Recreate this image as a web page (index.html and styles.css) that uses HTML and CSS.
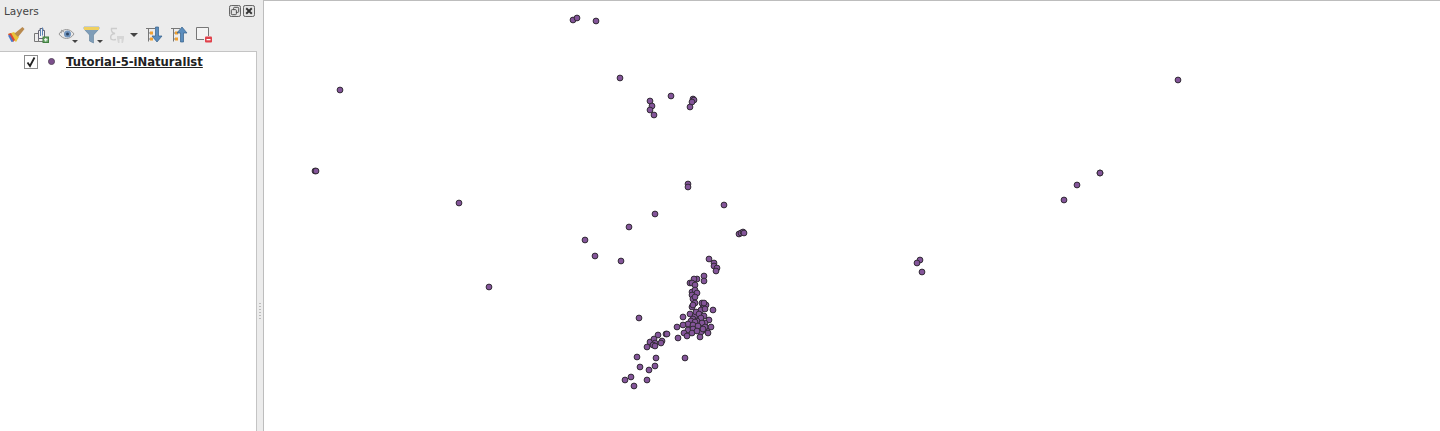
FILE: index.html
```html
<!DOCTYPE html>
<html>
  <head>
    <title>Layers</title>
    <link rel="stylesheet" href="styles.css">
  </head>
  <body>
    <div class="panel">
      <div class="panel-title">
        <span class="panel-name">Layers</span>
        <svg class="title-btn" viewBox="0 0 13 13">
          <rect x="0.5" y="0.5" width="12" height="12" rx="2" fill="#e4e4e4" stroke="#555"/>
          <rect x="5" y="2.5" width="5.5" height="5.5" rx="1" fill="none" stroke="#444"/>
          <rect x="2.5" y="5" width="5.5" height="5.5" rx="1" fill="#e4e4e4" stroke="#444"/>
        </svg>
        <svg class="title-btn" viewBox="0 0 13 13">
          <rect x="0.5" y="0.5" width="12" height="12" rx="2" fill="#e4e4e4" stroke="#555"/>
          <path d="M3.5 3.5l6 6M9.5 3.5l-6 6" stroke="#333" stroke-width="2"/>
        </svg>
      </div>

      <div class="toolbar">
        <!-- style brush -->
        <svg class="tool" viewBox="0 0 18 18">
          <path d="M1 8l6-2 5 5-3 5z" fill="#e8c33a"/>
          <path d="M1 8l3-1 4 7-2 2z" fill="#d8483a"/>
          <path d="M1 9.500l3.500 6.500 2-.5-3.500-6.500z" fill="#4a78c8"/>
          <path d="M7.500 7.500l8-6.500 2 2-6.500 8z" fill="#b98a4e"/>
        </svg>
        <!-- add group -->
        <svg class="tool tool-narrow" viewBox="0 0 16 18">
          <path d="M1.500 7.500h4v8h-4zM5.500 12.500h6v3h-6z" fill="#eee" stroke="#777"/>
          <path d="M5.500 4.500v8h6v-8h-1.500v-2h-3v2z" fill="#f2f2f2" stroke="#667"/>
          <path d="M7.500 3v7M9.500 1.500v8" stroke="#5a83b5"/>
          <rect x="10" y="11" width="5.500" height="5.500" fill="#6aa56a" stroke="#3f7f3f"/>
          <path d="M12.750 12v3.500M11 13.750h3.500" stroke="#fff"/>
        </svg>
        <!-- visibility -->
        <svg class="tool tool-wide" viewBox="0 0 22 18">
          <path d="M1 8c4-6 11-6 15 0-4 6-11 6-15 0z" fill="#e8e8e8" stroke="#999"/>
          <path d="M3 4l3 2M2 6l2 1" stroke="#999"/>
          <circle cx="9.500" cy="8" r="3.500" fill="#6f93bd"/>
          <circle cx="9.500" cy="8" r="1.500" fill="#2e4460"/>
          <path d="M14 14h6l-3 3z" fill="#444"/>
        </svg>
        <!-- filter -->
        <svg class="tool tool-wide" viewBox="0 0 22 18">
          <path d="M1 1h15v2l-5.500 6v8l-4-2v-6L1 3z" fill="#7f9db8" stroke="#4f7291" stroke-width=".5"/>
          <path d="M1 1h15v3H1z" fill="#efd060"/>
          <path d="M14 14h6l-3 3z" fill="#444"/>
        </svg>
        <!-- expression filter, disabled -->
        <svg class="tool" viewBox="0 0 18 18">
          <path d="M9 2.500H3.500C3 5 4 7 7 7.500 3 8 2 10 3 13c1 1 3 1 5 .5" fill="none" stroke="#ccc" stroke-width="1.400"/>
          <path d="M9 10h7v2.500l-1 4.500h-1.500v-4h-2v4H10l-1-4.500z" fill="#d6d6d6"/>
        </svg>
        <svg class="caret" viewBox="0 0 8 4"><path d="M0 0h8L4 4z" fill="#444"/></svg>
        <!-- expand all -->
        <svg class="tool" viewBox="0 0 18 18">
          <path d="M1 2.500h9M3.500 2.500v13M3.500 7h2M3.500 13h2" stroke="#777" fill="none"/>
          <rect x="5" y="5.500" width="3" height="3" fill="#f0a030"/>
          <rect x="5" y="11.500" width="3" height="3" fill="#f0a030"/>
          <path d="M10.500 1h3v9H17l-5 6-5-6h3.500z" fill="#5b8dbd" stroke="#35608a" stroke-width=".7"/>
        </svg>
        <!-- collapse all -->
        <svg class="tool" viewBox="0 0 18 18">
          <path d="M1 2.500h9M3.500 2.500v13M3.500 7h2M3.500 13h2" stroke="#777" fill="none"/>
          <rect x="5" y="5.500" width="3" height="3" fill="#f0a030"/>
          <rect x="5" y="11.500" width="3" height="3" fill="#f0a030"/>
          <path d="M10.500 16h3V7H17L12 1 7 7h3.500z" fill="#5b8dbd" stroke="#35608a" stroke-width=".7"/>
        </svg>
        <!-- remove layer -->
        <svg class="tool" viewBox="0 0 18 18">
          <path d="M9 13.500H1.500v-12h12V10" fill="#f4f4f4" stroke="#777"/>
          <rect x="10" y="10.500" width="7" height="6" rx="1" fill="#e0414b"/>
          <rect x="11.500" y="13" width="4" height="1.300" fill="#fff"/>
        </svg>
      </div>

      <div class="tree">
        <div class="tree-row">
          <span class="check">
            <svg viewBox="0 0 12 12"><path d="M2.500 6.500L5 10l4.500-8.500" fill="none" stroke="#222" stroke-width="1.800"/></svg>
          </span>
          <span class="layer-dot"></span>
          <span class="layer-name">Tutorial-5-iNaturalist</span>
        </div>
      </div>
    </div>

    <div class="splitter">
      <span></span><span></span><span></span><span></span><span></span><span></span>
    </div>

    <div class="map">
      <svg class="points" viewBox="264 1 1176 430" width="1176" height="430">
        <g>
          <circle cx="573" cy="20"/><circle cx="577" cy="18"/><circle cx="596" cy="21"/>
          <circle cx="620" cy="78"/><circle cx="340" cy="90"/><circle cx="1178" cy="80"/>
          <circle cx="650" cy="101"/><circle cx="652" cy="106"/><circle cx="650" cy="110"/>
          <circle cx="654" cy="115"/><circle cx="671" cy="96"/><circle cx="693" cy="99"/>
          <circle cx="694" cy="100"/><circle cx="692" cy="102"/><circle cx="690" cy="107"/>
          <circle cx="315" cy="171"/><circle cx="316" cy="171"/><circle cx="688" cy="184"/>
          <circle cx="688" cy="187"/><circle cx="1100" cy="173"/><circle cx="1100" cy="173"/><circle cx="1077" cy="185"/>
          <circle cx="1064" cy="200"/><circle cx="459" cy="203"/><circle cx="724" cy="205"/>
          <circle cx="655" cy="214"/><circle cx="629" cy="227"/><circle cx="739" cy="234"/>
          <circle cx="741" cy="233"/><circle cx="743" cy="232"/><circle cx="744" cy="233"/>
          <circle cx="585" cy="240"/><circle cx="595" cy="256"/><circle cx="621" cy="261"/>
          <circle cx="920" cy="260"/><circle cx="917" cy="263"/><circle cx="922" cy="272"/>
          <circle cx="489" cy="287"/>
          <circle cx="709" cy="259"/><circle cx="714" cy="263"/><circle cx="714" cy="266"/>
          <circle cx="717" cy="268"/><circle cx="716" cy="271"/><circle cx="704" cy="276"/>
          <circle cx="704" cy="281"/><circle cx="697" cy="279"/><circle cx="694" cy="279"/>
          <circle cx="690" cy="283"/><circle cx="692" cy="283"/><circle cx="695" cy="285"/>
          <circle cx="692" cy="292"/><circle cx="695" cy="290"/><circle cx="697" cy="293"/><circle cx="692" cy="295"/>
          <circle cx="693" cy="299"/><circle cx="695" cy="297"/><circle cx="692" cy="307"/><circle cx="695" cy="303"/>
          <circle cx="693" cy="305"/><circle cx="703" cy="305"/><circle cx="704" cy="307"/><circle cx="706" cy="305"/>
          <circle cx="702" cy="303"/><circle cx="704" cy="303"/><circle cx="713" cy="310"/><circle cx="701" cy="310"/>
          <circle cx="705" cy="309"/><circle cx="690" cy="314"/><circle cx="695" cy="316"/><circle cx="693" cy="319"/>
          <circle cx="696" cy="312"/><circle cx="699" cy="314"/><circle cx="704" cy="316"/><circle cx="701" cy="318"/>
          <circle cx="709" cy="320"/><circle cx="683" cy="317"/><circle cx="697" cy="321"/><circle cx="691" cy="321"/>
          <circle cx="705" cy="323"/><circle cx="702" cy="323"/><circle cx="695" cy="322"/>
          <circle cx="688" cy="324"/><circle cx="683" cy="325"/><circle cx="693" cy="325"/><circle cx="698" cy="326"/>
          <circle cx="677" cy="327"/><circle cx="711" cy="327"/><circle cx="707" cy="331"/><circle cx="705" cy="327"/>
          <circle cx="701" cy="332"/><circle cx="708" cy="333"/><circle cx="703" cy="329"/><circle cx="688" cy="330"/>
          <circle cx="693" cy="329"/><circle cx="684" cy="333"/><circle cx="692" cy="333"/><circle cx="697" cy="331"/>
          <circle cx="687" cy="336"/><circle cx="678" cy="338"/><circle cx="700" cy="337"/>
          <circle cx="639" cy="318"/><circle cx="658" cy="335"/><circle cx="666" cy="334"/>
          <circle cx="667" cy="334"/><circle cx="650" cy="342"/><circle cx="654" cy="339"/><circle cx="655" cy="343"/>
          <circle cx="662" cy="341"/><circle cx="661" cy="343"/><circle cx="653" cy="345"/>
          <circle cx="655" cy="346"/><circle cx="647" cy="347"/><circle cx="637" cy="357"/>
          <circle cx="656" cy="358"/><circle cx="685" cy="358"/><circle cx="655" cy="366"/>
          <circle cx="649" cy="370"/><circle cx="640" cy="367"/><circle cx="631" cy="377"/>
          <circle cx="625" cy="380"/><circle cx="647" cy="380"/><circle cx="634" cy="386"/>
        </g>
      </svg>
    </div>
  </body>
</html>
```

FILE: styles.css
```css
html, body {
  margin: 0;
  height: 100%;
  overflow: hidden;
}
body {
  display: flex;
  background-color: #ececec;
  font-family: "DejaVu Sans", sans-serif;
  color: #222;
}

.panel {
  width: 257px;
  flex: none;
  display: flex;
  flex-direction: column;
}
.panel-title {
  height: 21px;
  display: flex;
  align-items: center;
  gap: 2px;
  padding: 0 2px 0 4px;
}
.panel-name {
  flex: 1;
  font-size: 10.5px;
  color: #444;
}
.title-btn {
  width: 12px;
  height: 12px;
}

.toolbar {
  height: 28px;
  padding-bottom: 2px;
  display: flex;
  align-items: center;
  padding-left: 7px;
}
.tool {
  width: 18px;
  height: 18px;
  margin-right: 7px;
}
.tool-narrow {
  width: 16px;
  margin-left: 1px;
  margin-right: 9px;
}
.tool-wide {
  width: 22px;
  margin-right: 3px;
}
.caret {
  width: 8px;
  height: 4px;
  margin: 0 7px 0 -3px;
}

.tree {
  flex: 1;
  background: #fff;
  border: 1px solid #c4c4c4;
  border-bottom: 0;
  border-left: 0;
}
.tree-row {
  height: 19px;
  display: flex;
  align-items: center;
  padding-left: 24px;
}
.check {
  width: 12px;
  height: 12px;
  background: #fff;
  border: 1px solid #8c8c8c;
  display: flex;
}
.layer-dot {
  width: 5px;
  height: 5px;
  margin: 0 11px 0 10px;
  border-radius: 50%;
  background: #7d4f8e;
  border: .5px solid #5a4a60;
}
.layer-name {
  font-size: 11.6px;
  font-weight: bold;
  text-decoration: underline;
  color: #222;
}

.splitter {
  width: 6px;
  flex: none;
  display: flex;
  flex-direction: column;
  justify-content: center;
  align-items: center;
  gap: 2px;
  padding-top: 190px;
  box-sizing: border-box;
  height: 431px;
}
.splitter span {
  width: 2px;
  height: 1px;
  background: #bbb;
}

.map {
  flex: 1;
  background: #fff;
  border: 1px solid #bdbdbd;
  border-width: 1px 0 0 1px;
}
.points {
  display: block;
}
.points circle {
  r: 2.9px;
  fill: #84559a;
  stroke: #322b35;
  stroke-width: 1;
}
```
